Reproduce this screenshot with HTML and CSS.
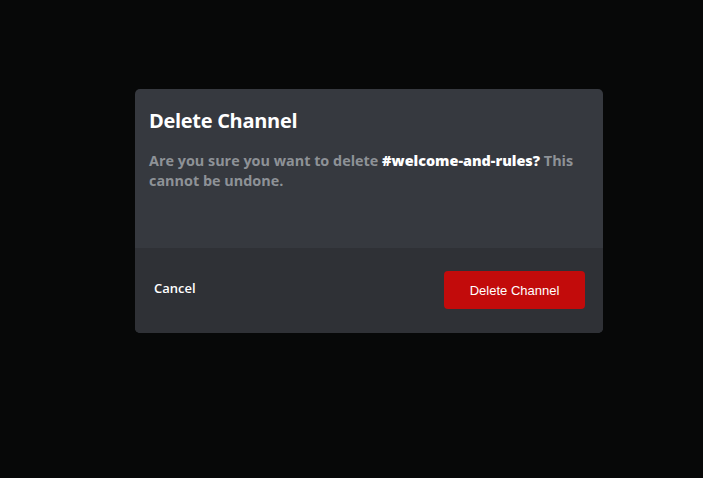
FILE: index.html
```html
<!DOCTYPE html>
<html>
<head>
<meta charset="utf-8">
<link rel="stylesheet" href="styles.css">
</head>
<body>
<div class="backdrop">
  <div class="modal">
    <div class="modal-body">
      <h2 class="title">Delete Channel</h2>
      <p class="message">Are you sure you want to delete <strong class="channel">#welcome-and-rules?</strong> This cannot be undone.</p>
    </div>
    <div class="modal-footer">
      <button class="btn-cancel">Cancel</button>
      <button class="btn-delete">Delete Channel</button>
    </div>
  </div>
</div>
</body>
</html>
```
FILE: styles.css
```css
html, body {
  margin: 0;
  padding: 0;
  background: #070808;
  height: 100%;
}
.backdrop {
  height: 478px;
  padding-top: 89px;
  padding-left: 135px;
  box-sizing: border-box;
}
.modal {
  width: 468px;
  border-radius: 5px;
  overflow: hidden;
  background: #36393f;
}
.modal-body {
  height: 159px;
  box-sizing: border-box;
  padding: 19px 14px 0 14px;
}
.title {
  margin: 0;
  font-family: "Open Sans", sans-serif;
  font-weight: 700;
  font-size: 20px;
  line-height: 26px;
  color: #ffffff;
  letter-spacing: -0.3px;
}
.message {
  margin: 17px 0 0 0;
  font-family: "Open Sans", sans-serif;
  font-weight: 700;
  font-size: 14.4px;
  line-height: 20px;
  color: #8e9297;
}
.channel {
  color: #ffffff;
}
.modal-footer {
  height: 85px;
  background: #2f3136;
  display: flex;
  align-items: center;
  justify-content: space-between;
  padding: 0 18px 0 19px;
}
.btn-cancel {
  background: none;
  border: none;
  padding: 0;
  color: #ffffff;
  font-family: "Open Sans", sans-serif;
  font-size: 13px;
  font-weight: 600;
  margin-bottom: 6px;
}
.btn-delete {
  width: 141px;
  height: 38px;
  border: none;
  border-radius: 4px;
  background: #c20b0b;
  color: #ffffff;
  font-family: "Liberation Sans", Arial, sans-serif;
  font-size: 13px;
  margin-bottom: 1px;
}
```
